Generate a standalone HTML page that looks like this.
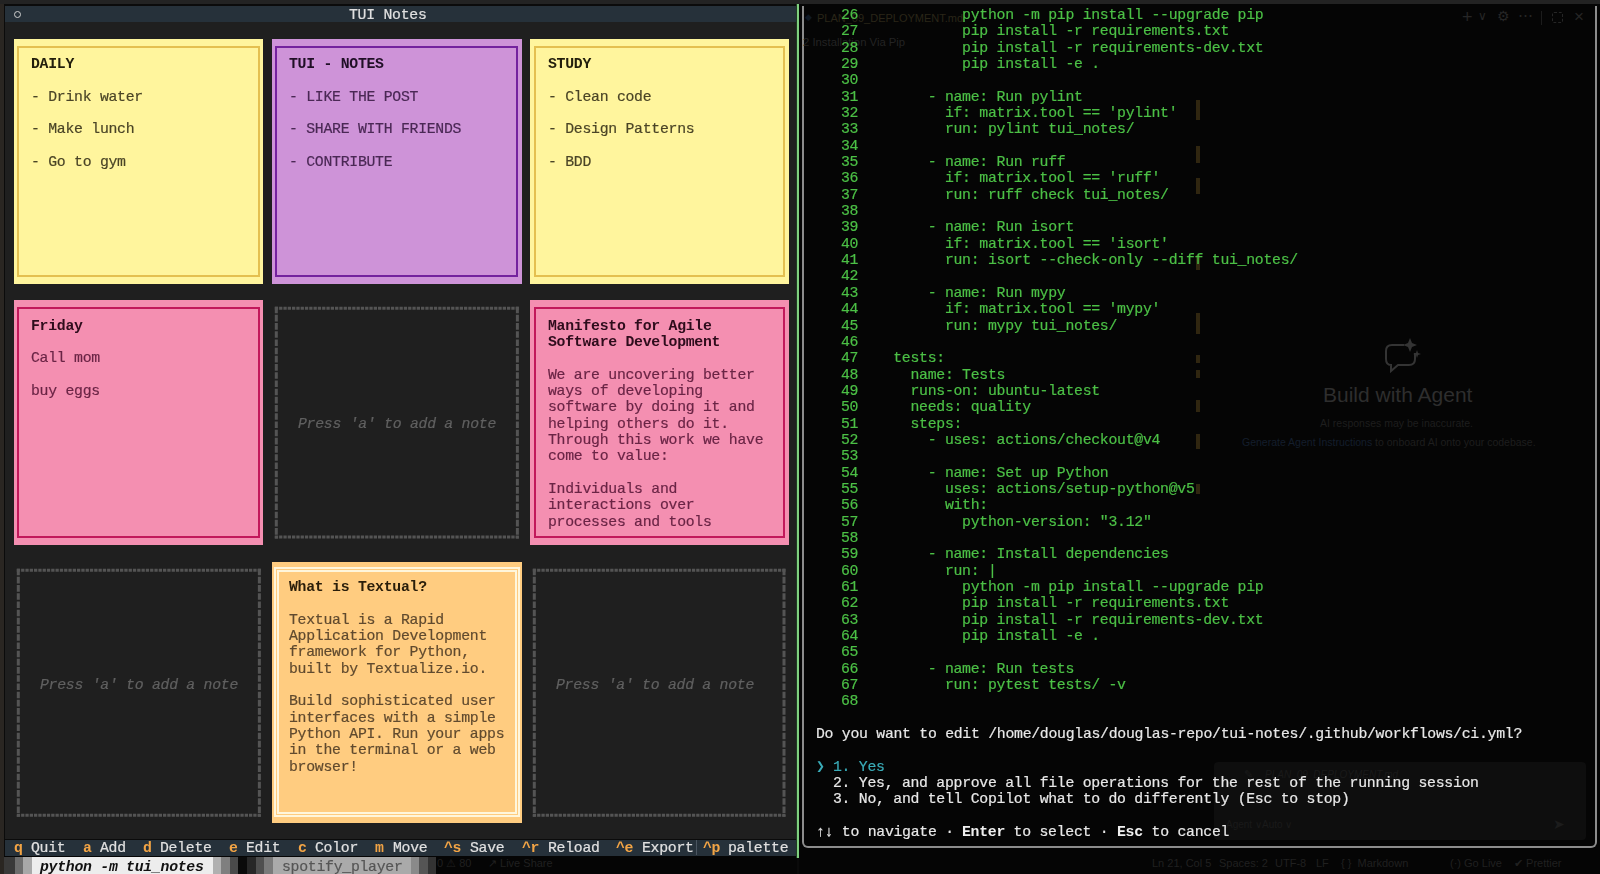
<!DOCTYPE html>
<html><head><meta charset="utf-8"><style>
html,body{margin:0;padding:0;width:1600px;height:874px;overflow:hidden;background:#0a0a0a}
.r{position:absolute;box-sizing:content-box}
.t{position:absolute;white-space:pre;will-change:transform;-webkit-text-stroke:0.2px currentColor;font-family:"Liberation Mono",monospace;font-size:14.8px;line-height:16.34px}
.s{position:absolute;white-space:pre;font-family:"Liberation Sans",sans-serif;line-height:1.2}
</style></head><body>
<div class="r" style="left:0.00px;top:0.00px;width:1600.00px;height:4.00px;background:#232323;"></div>
<div class="r" style="left:0.00px;top:4.00px;width:4.00px;height:870.00px;background:#2a2622;"></div>
<div class="r" style="left:4.00px;top:4.00px;width:793.00px;height:870.00px;background:#0b0b0b;"></div>
<div class="r" style="left:5.00px;top:6.00px;width:791.00px;height:833.00px;background:#1f1f1f;"></div>
<div class="r" style="left:5.00px;top:6.00px;width:791.00px;height:16.00px;background:#26313a;"></div>
<div class="r" style="left:13.9px;top:11.2px;width:5px;height:5px;border:1.7px solid #d0d0d0;border-radius:50%"></div>
<div class="t" style="left:349.49px;top:7.05px;color:#e0e0e0;letter-spacing:-0.270px;">TUI Notes</div>
<div class="r" style="left:14.00px;top:39.00px;width:249.00px;height:245.00px;background:#fff59d;"></div>
<div class="r" style="left:17.00px;top:45.95px;width:239.08px;height:226.76px;border:2px solid #e4c050"></div>
<div class="t" style="left:30.92px;top:56.07px;color:#221e0c;letter-spacing:-0.270px;font-weight:bold;-webkit-text-stroke:0;">DAILY</div>
<div class="t" style="left:30.92px;top:88.75px;color:#4a4426;letter-spacing:-0.270px;">- Drink water</div>
<div class="t" style="left:30.92px;top:121.43px;color:#4a4426;letter-spacing:-0.270px;">- Make lunch</div>
<div class="t" style="left:30.92px;top:154.11px;color:#4a4426;letter-spacing:-0.270px;">- Go to gym</div>
<div class="r" style="left:272.00px;top:39.00px;width:250.00px;height:245.00px;background:#ce93d8;"></div>
<div class="r" style="left:275.30px;top:45.95px;width:239.08px;height:226.76px;border:2px solid #74229e"></div>
<div class="t" style="left:289.22px;top:56.07px;color:#200f26;letter-spacing:-0.270px;font-weight:bold;-webkit-text-stroke:0;">TUI - NOTES</div>
<div class="t" style="left:289.22px;top:88.75px;color:#4a2855;letter-spacing:-0.270px;">- LIKE THE POST</div>
<div class="t" style="left:289.22px;top:121.43px;color:#4a2855;letter-spacing:-0.270px;">- SHARE WITH FRIENDS</div>
<div class="t" style="left:289.22px;top:154.11px;color:#4a2855;letter-spacing:-0.270px;">- CONTRIBUTE</div>
<div class="r" style="left:530.00px;top:39.00px;width:259.00px;height:245.00px;background:#fff59d;"></div>
<div class="r" style="left:533.61px;top:45.95px;width:247.69px;height:226.76px;border:2px solid #e4c050"></div>
<div class="t" style="left:547.52px;top:56.07px;color:#221e0c;letter-spacing:-0.270px;font-weight:bold;-webkit-text-stroke:0;">STUDY</div>
<div class="t" style="left:547.52px;top:88.75px;color:#4a4426;letter-spacing:-0.270px;">- Clean code</div>
<div class="t" style="left:547.52px;top:121.43px;color:#4a4426;letter-spacing:-0.270px;">- Design Patterns</div>
<div class="t" style="left:547.52px;top:154.11px;color:#4a4426;letter-spacing:-0.270px;">- BDD</div>
<div class="r" style="left:14.00px;top:300.00px;width:249.00px;height:245.00px;background:#f48fb1;"></div>
<div class="r" style="left:17.00px;top:307.39px;width:239.08px;height:226.76px;border:2px solid #c2185b"></div>
<div class="t" style="left:30.92px;top:317.51px;color:#2e0c1c;letter-spacing:-0.270px;font-weight:bold;-webkit-text-stroke:0;">Friday</div>
<div class="t" style="left:30.92px;top:350.19px;color:#6a2445;letter-spacing:-0.270px;">Call mom</div>
<div class="t" style="left:30.92px;top:382.87px;color:#6a2445;letter-spacing:-0.270px;">buy eggs</div>
<svg class="r" style="left:272.00px;top:300.22px" width="249.69" height="245.10"><g stroke="#545454" stroke-width="3" fill="none"><line x1="2.81" y1="8.17" x2="246.89" y2="8.17" stroke-dasharray="3.3 1"/><line x1="2.81" y1="236.93" x2="246.89" y2="236.93" stroke-dasharray="3.3 1"/><line x1="4.31" y1="6.67" x2="4.31" y2="238.43" stroke-dasharray="6.6 1.6"/><line x1="245.39" y1="6.67" x2="245.39" y2="238.43" stroke-dasharray="6.6 1.6"/></g></svg>
<div class="t" style="left:297.83px;top:415.55px;color:#606060;letter-spacing:-0.270px;font-style:italic;">Press &#x27;a&#x27; to add a note</div>
<div class="r" style="left:530.00px;top:300.00px;width:259.00px;height:245.00px;background:#f48fb1;"></div>
<div class="r" style="left:533.61px;top:307.39px;width:247.69px;height:226.76px;border:2px solid #c2185b"></div>
<div class="t" style="left:547.52px;top:317.51px;color:#2e0c1c;letter-spacing:-0.270px;font-weight:bold;-webkit-text-stroke:0;">Manifesto for Agile</div>
<div class="t" style="left:547.52px;top:333.85px;color:#2e0c1c;letter-spacing:-0.270px;font-weight:bold;-webkit-text-stroke:0;">Software Development</div>
<div class="t" style="left:547.52px;top:366.53px;color:#6a2445;letter-spacing:-0.270px;">We are uncovering better</div>
<div class="t" style="left:547.52px;top:382.87px;color:#6a2445;letter-spacing:-0.270px;">ways of developing</div>
<div class="t" style="left:547.52px;top:399.21px;color:#6a2445;letter-spacing:-0.270px;">software by doing it and</div>
<div class="t" style="left:547.52px;top:415.55px;color:#6a2445;letter-spacing:-0.270px;">helping others do it.</div>
<div class="t" style="left:547.52px;top:431.89px;color:#6a2445;letter-spacing:-0.270px;">Through this work we have</div>
<div class="t" style="left:547.52px;top:448.23px;color:#6a2445;letter-spacing:-0.270px;">come to value:</div>
<div class="t" style="left:547.52px;top:480.91px;color:#6a2445;letter-spacing:-0.270px;">Individuals and</div>
<div class="t" style="left:547.52px;top:497.25px;color:#6a2445;letter-spacing:-0.270px;">interactions over</div>
<div class="t" style="left:547.52px;top:513.59px;color:#6a2445;letter-spacing:-0.270px;">processes and tools</div>
<svg class="r" style="left:13.70px;top:561.66px" width="249.69" height="261.44"><g stroke="#545454" stroke-width="3" fill="none"><line x1="2.80" y1="8.17" x2="246.88" y2="8.17" stroke-dasharray="3.3 1"/><line x1="2.80" y1="253.27" x2="246.88" y2="253.27" stroke-dasharray="3.3 1"/><line x1="4.30" y1="6.67" x2="4.30" y2="254.77" stroke-dasharray="6.6 1.6"/><line x1="245.38" y1="6.67" x2="245.38" y2="254.77" stroke-dasharray="6.6 1.6"/></g></svg>
<div class="t" style="left:39.53px;top:676.99px;color:#606060;letter-spacing:-0.270px;font-style:italic;">Press &#x27;a&#x27; to add a note</div>
<div class="r" style="left:272.00px;top:562.00px;width:250.00px;height:261.00px;background:#ffcc80;"></div>
<div class="r" style="left:273.80px;top:567.33px;width:242.08px;height:246.10px;border:2px solid #fff6dc"></div>
<div class="r" style="left:276.80px;top:570.33px;width:236.08px;height:240.10px;border:2px solid #fff6dc"></div>
<div class="t" style="left:289.22px;top:578.95px;color:#2a1e0a;letter-spacing:-0.270px;font-weight:bold;-webkit-text-stroke:0;">What is Textual?</div>
<div class="t" style="left:289.22px;top:611.63px;color:#604a2e;letter-spacing:-0.270px;">Textual is a Rapid</div>
<div class="t" style="left:289.22px;top:627.97px;color:#604a2e;letter-spacing:-0.270px;">Application Development</div>
<div class="t" style="left:289.22px;top:644.31px;color:#604a2e;letter-spacing:-0.270px;">framework for Python,</div>
<div class="t" style="left:289.22px;top:660.65px;color:#604a2e;letter-spacing:-0.270px;">built by Textualize.io.</div>
<div class="t" style="left:289.22px;top:693.33px;color:#604a2e;letter-spacing:-0.270px;">Build sophisticated user</div>
<div class="t" style="left:289.22px;top:709.67px;color:#604a2e;letter-spacing:-0.270px;">interfaces with a simple</div>
<div class="t" style="left:289.22px;top:726.01px;color:#604a2e;letter-spacing:-0.270px;">Python API. Run your apps</div>
<div class="t" style="left:289.22px;top:742.35px;color:#604a2e;letter-spacing:-0.270px;">in the terminal or a web</div>
<div class="t" style="left:289.22px;top:758.69px;color:#604a2e;letter-spacing:-0.270px;">browser!</div>
<svg class="r" style="left:530.30px;top:561.66px" width="258.30" height="261.44"><g stroke="#545454" stroke-width="3" fill="none"><line x1="2.81" y1="8.17" x2="255.50" y2="8.17" stroke-dasharray="3.3 1"/><line x1="2.81" y1="253.27" x2="255.50" y2="253.27" stroke-dasharray="3.3 1"/><line x1="4.31" y1="6.67" x2="4.31" y2="254.77" stroke-dasharray="6.6 1.6"/><line x1="254.00" y1="6.67" x2="254.00" y2="254.77" stroke-dasharray="6.6 1.6"/></g></svg>
<div class="t" style="left:556.13px;top:676.99px;color:#606060;letter-spacing:-0.270px;font-style:italic;">Press &#x27;a&#x27; to add a note</div>
<div class="r" style="left:5.00px;top:840.00px;width:791.00px;height:16.00px;background:#26313a;"></div>
<div class="t" style="left:13.70px;top:840.39px;color:#f2a445;letter-spacing:-0.270px;font-weight:bold;-webkit-text-stroke:0;">q</div>
<div class="t" style="left:82.58px;top:840.39px;color:#f2a445;letter-spacing:-0.270px;font-weight:bold;-webkit-text-stroke:0;">a</div>
<div class="t" style="left:142.85px;top:840.39px;color:#f2a445;letter-spacing:-0.270px;font-weight:bold;-webkit-text-stroke:0;">d</div>
<div class="t" style="left:228.95px;top:840.39px;color:#f2a445;letter-spacing:-0.270px;font-weight:bold;-webkit-text-stroke:0;">e</div>
<div class="t" style="left:297.83px;top:840.39px;color:#f2a445;letter-spacing:-0.270px;font-weight:bold;-webkit-text-stroke:0;">c</div>
<div class="t" style="left:375.32px;top:840.39px;color:#f2a445;letter-spacing:-0.270px;font-weight:bold;-webkit-text-stroke:0;">m</div>
<div class="t" style="left:444.20px;top:840.39px;color:#f2a445;letter-spacing:-0.270px;font-weight:bold;-webkit-text-stroke:0;">^s</div>
<div class="t" style="left:521.69px;top:840.39px;color:#f2a445;letter-spacing:-0.270px;font-weight:bold;-webkit-text-stroke:0;">^r</div>
<div class="t" style="left:616.40px;top:840.39px;color:#f2a445;letter-spacing:-0.270px;font-weight:bold;-webkit-text-stroke:0;">^e</div>
<div class="t" style="left:702.50px;top:840.39px;color:#f2a445;letter-spacing:-0.270px;font-weight:bold;-webkit-text-stroke:0;">^p</div>
<div class="t" style="left:30.92px;top:840.39px;color:#e0e0e0;letter-spacing:-0.270px;">Quit</div>
<div class="t" style="left:99.80px;top:840.39px;color:#e0e0e0;letter-spacing:-0.270px;">Add</div>
<div class="t" style="left:160.07px;top:840.39px;color:#e0e0e0;letter-spacing:-0.270px;">Delete</div>
<div class="t" style="left:246.17px;top:840.39px;color:#e0e0e0;letter-spacing:-0.270px;">Edit</div>
<div class="t" style="left:315.05px;top:840.39px;color:#e0e0e0;letter-spacing:-0.270px;">Color</div>
<div class="t" style="left:392.54px;top:840.39px;color:#e0e0e0;letter-spacing:-0.270px;">Move</div>
<div class="t" style="left:470.03px;top:840.39px;color:#e0e0e0;letter-spacing:-0.270px;">Save</div>
<div class="t" style="left:547.52px;top:840.39px;color:#e0e0e0;letter-spacing:-0.270px;">Reload</div>
<div class="t" style="left:642.23px;top:840.39px;color:#e0e0e0;letter-spacing:-0.270px;">Export</div>
<div class="t" style="left:728.33px;top:840.39px;color:#e0e0e0;letter-spacing:-0.270px;">palette</div>
<div class="r" style="left:696.00px;top:840.00px;width:1.00px;height:15.00px;background:#4a5560;"></div>
<div class="r" style="left:4.00px;top:856.00px;width:793.00px;height:18.00px;background:#050505;"></div>
<div class="r" style="left:4.00px;top:857.00px;width:11.00px;height:17.00px;background:#393939;"></div>
<div class="r" style="left:15.00px;top:857.00px;width:8.00px;height:17.00px;background:#6d6d6d;"></div>
<div class="r" style="left:23.00px;top:857.00px;width:9.00px;height:17.00px;background:#a8a8a8;"></div>
<div class="r" style="left:32.00px;top:857.00px;width:181.00px;height:17.00px;background:#ededed;"></div>
<div class="t" style="left:40.43px;top:858.53px;color:#111111;letter-spacing:-0.270px;font-weight:bold;-webkit-text-stroke:0;font-style:italic;">python -m tui_notes</div>
<div class="r" style="left:213.00px;top:857.00px;width:8.00px;height:17.00px;background:#b0b0b0;"></div>
<div class="r" style="left:221.00px;top:857.00px;width:9.00px;height:17.00px;background:#7f7f7f;"></div>
<div class="r" style="left:230.00px;top:857.00px;width:8.00px;height:17.00px;background:#4a4a4a;"></div>
<div class="r" style="left:238.00px;top:857.00px;width:9.00px;height:17.00px;background:#0a0a0a;"></div>
<div class="r" style="left:247.00px;top:857.00px;width:9.00px;height:17.00px;background:#272727;"></div>
<div class="r" style="left:256.00px;top:857.00px;width:8.00px;height:17.00px;background:#4f4f4f;"></div>
<div class="r" style="left:264.00px;top:857.00px;width:9.00px;height:17.00px;background:#7a7a7a;"></div>
<div class="r" style="left:273.00px;top:857.00px;width:138.00px;height:17.00px;background:#aaaaaa;"></div>
<div class="t" style="left:281.51px;top:858.53px;color:#555555;letter-spacing:-0.270px;">spotify_player</div>
<div class="r" style="left:411.00px;top:857.00px;width:8.00px;height:17.00px;background:#8a8a8a;"></div>
<div class="r" style="left:419.00px;top:857.00px;width:9.00px;height:17.00px;background:#555555;"></div>
<div class="r" style="left:428.00px;top:857.00px;width:8.00px;height:17.00px;background:#333333;"></div>
<div class="r" style="left:796.00px;top:4.00px;width:1.00px;height:854.00px;background:#1f3a22;"></div>
<div class="r" style="left:797.00px;top:4.00px;width:2.00px;height:854.00px;background:#7fcf7f;"></div>
<div class="r" style="left:799.00px;top:4.00px;width:801.00px;height:870.00px;background:#050505;"></div>
<div class="r" style="left:802px;top:6px;width:791px;height:840px;border:2px solid #8c8c8c;border-top:none;border-radius:0 0 6px 6px"></div>
<div class="s" style="left:805px;top:12px;font-size:9px;color:#101a26;">◆</div>
<div class="s" style="left:817px;top:11.5px;font-size:11px;color:#2a2518;">PLAN_09_DEPLOYMENT.md</div>
<div class="s" style="left:803px;top:35.5px;font-size:11.3px;color:#232323;">2 Installation Via Pip</div>
<div class="r" style="left:803.00px;top:102.00px;width:397.00px;height:0.00px;background:#151515;"></div>
<div class="s" style="left:1462px;top:7px;font-size:18px;color:#262626;">+</div>
<div class="s" style="left:1478px;top:9px;font-size:12px;color:#262626;">∨</div>
<div class="s" style="left:1497px;top:8px;font-size:14px;color:#262626;">⚙</div>
<div class="s" style="left:1518px;top:6px;font-size:15px;color:#262626;">⋯</div>
<div class="r" style="left:1541.00px;top:11.00px;width:1.00px;height:14.00px;background:#1c1c1c;"></div>
<div class="r" style="left:1552px;top:12px;width:9px;height:9px;border:1.3px dashed #262626;border-radius:2px"></div>
<div class="s" style="left:1574px;top:7px;font-size:17px;color:#262626;">×</div>
<div class="r" style="left:1196.00px;top:100.00px;width:4.00px;height:20.00px;background:#302610;"></div>
<div class="r" style="left:1196.00px;top:146.00px;width:4.00px;height:17.00px;background:#302610;"></div>
<div class="r" style="left:1196.00px;top:178.00px;width:4.00px;height:16.00px;background:#302610;"></div>
<div class="r" style="left:1196.00px;top:255.00px;width:4.00px;height:15.00px;background:#302610;"></div>
<div class="r" style="left:1196.00px;top:313.00px;width:4.00px;height:21.00px;background:#302610;"></div>
<div class="r" style="left:1196.00px;top:355.00px;width:4.00px;height:8.00px;background:#302610;"></div>
<div class="r" style="left:1196.00px;top:370.00px;width:4.00px;height:8.00px;background:#302610;"></div>
<div class="r" style="left:1196.00px;top:400.00px;width:4.00px;height:12.00px;background:#302610;"></div>
<div class="r" style="left:1196.00px;top:434.00px;width:4.00px;height:15.00px;background:#302610;"></div>
<div class="r" style="left:1196.00px;top:484.00px;width:4.00px;height:10.00px;background:#302610;"></div>
<svg class="r" style="left:1380px;top:336px" width="44" height="40"><g fill="none" stroke="#343434" stroke-width="2"><path d="M12 9 H24 M35 17 V23 Q35 29 29 29 H18 L11 35 V29 Q6 29 6 23 V15 Q6 9 12 9"/></g><path d="M30 2 L32 7 L37 9 L32 11 L30 16 L28 11 L23 9 L28 7Z M37 14 L38 17 L41 18 L38 19 L37 22 L36 19 L33 18 L36 17Z" fill="#343434"/></svg>
<div class="s" style="left:1323px;top:382px;font-size:21px;color:#2e2e2e;">Build with Agent</div>
<div class="s" style="left:1320px;top:417px;font-size:10.5px;color:#1e1e1e;">AI responses may be inaccurate.</div>
<div class="s" style="left:1242px;top:436px;font-size:10.5px;color:#1e1e1e"><span style="color:#141e2c">Generate Agent Instructions</span> to onboard AI onto your codebase.</div>
<div class="r" style="left:1214px;top:762px;width:372px;height:78px;background:#0e0e0e;border-radius:4px"></div>
<div class="s" style="left:1244px;top:768px;font-size:11px;color:#1a1a1a;">✎</div>
<div class="s" style="left:1265px;top:769px;font-size:10px;color:#1a1a1a;font-style:italic;">PLAN_09_DEPLOYMENT.md</div>
<div class="s" style="left:1226px;top:819px;font-size:10px;color:#1a1a1a;">Agent ∨</div>
<div class="s" style="left:1262px;top:819px;font-size:10px;color:#1a1a1a;">Auto ∨</div>
<div class="s" style="left:1553px;top:816px;font-size:14px;color:#1c1c1c;">➤</div>
<div class="s" style="left:1152px;top:857px;font-size:11px;color:#202020;">Ln 21, Col 5</div>
<div class="s" style="left:1219px;top:857px;font-size:11px;color:#202020;">Spaces: 2</div>
<div class="s" style="left:1275px;top:857px;font-size:11px;color:#202020;">UTF-8</div>
<div class="s" style="left:1316px;top:857px;font-size:11px;color:#202020;">LF</div>
<div class="s" style="left:1341px;top:857px;font-size:11px;color:#202020;">{ }  Markdown</div>
<div class="s" style="left:1450px;top:857px;font-size:11px;color:#202020;">(·) Go Live</div>
<div class="s" style="left:1514px;top:857px;font-size:11px;color:#202020;">✔ Prettier</div>
<div class="s" style="left:437px;top:857px;font-size:11px;color:#202020;">0 ⚠ 80</div>
<div class="s" style="left:488px;top:857px;font-size:11px;color:#202020;">↗ Live Share</div>
<div class="t" style="left:841.43px;top:7.05px;color:#4cc046;letter-spacing:-0.270px;">26</div>
<div class="t" style="left:875.87px;top:7.05px;color:#4cc046;letter-spacing:-0.270px;">          python -m pip install --upgrade pip</div>
<div class="t" style="left:841.43px;top:23.39px;color:#4cc046;letter-spacing:-0.270px;">27</div>
<div class="t" style="left:875.87px;top:23.39px;color:#4cc046;letter-spacing:-0.270px;">          pip install -r requirements.txt</div>
<div class="t" style="left:841.43px;top:39.73px;color:#4cc046;letter-spacing:-0.270px;">28</div>
<div class="t" style="left:875.87px;top:39.73px;color:#4cc046;letter-spacing:-0.270px;">          pip install -r requirements-dev.txt</div>
<div class="t" style="left:841.43px;top:56.07px;color:#4cc046;letter-spacing:-0.270px;">29</div>
<div class="t" style="left:875.87px;top:56.07px;color:#4cc046;letter-spacing:-0.270px;">          pip install -e .</div>
<div class="t" style="left:841.43px;top:72.41px;color:#4cc046;letter-spacing:-0.270px;">30</div>
<div class="t" style="left:841.43px;top:88.75px;color:#4cc046;letter-spacing:-0.270px;">31</div>
<div class="t" style="left:875.87px;top:88.75px;color:#4cc046;letter-spacing:-0.270px;">      - name: Run pylint</div>
<div class="t" style="left:841.43px;top:105.09px;color:#4cc046;letter-spacing:-0.270px;">32</div>
<div class="t" style="left:875.87px;top:105.09px;color:#4cc046;letter-spacing:-0.270px;">        if: matrix.tool == &#x27;pylint&#x27;</div>
<div class="t" style="left:841.43px;top:121.43px;color:#4cc046;letter-spacing:-0.270px;">33</div>
<div class="t" style="left:875.87px;top:121.43px;color:#4cc046;letter-spacing:-0.270px;">        run: pylint tui_notes/</div>
<div class="t" style="left:841.43px;top:137.77px;color:#4cc046;letter-spacing:-0.270px;">34</div>
<div class="t" style="left:841.43px;top:154.11px;color:#4cc046;letter-spacing:-0.270px;">35</div>
<div class="t" style="left:875.87px;top:154.11px;color:#4cc046;letter-spacing:-0.270px;">      - name: Run ruff</div>
<div class="t" style="left:841.43px;top:170.45px;color:#4cc046;letter-spacing:-0.270px;">36</div>
<div class="t" style="left:875.87px;top:170.45px;color:#4cc046;letter-spacing:-0.270px;">        if: matrix.tool == &#x27;ruff&#x27;</div>
<div class="t" style="left:841.43px;top:186.79px;color:#4cc046;letter-spacing:-0.270px;">37</div>
<div class="t" style="left:875.87px;top:186.79px;color:#4cc046;letter-spacing:-0.270px;">        run: ruff check tui_notes/</div>
<div class="t" style="left:841.43px;top:203.13px;color:#4cc046;letter-spacing:-0.270px;">38</div>
<div class="t" style="left:841.43px;top:219.47px;color:#4cc046;letter-spacing:-0.270px;">39</div>
<div class="t" style="left:875.87px;top:219.47px;color:#4cc046;letter-spacing:-0.270px;">      - name: Run isort</div>
<div class="t" style="left:841.43px;top:235.81px;color:#4cc046;letter-spacing:-0.270px;">40</div>
<div class="t" style="left:875.87px;top:235.81px;color:#4cc046;letter-spacing:-0.270px;">        if: matrix.tool == &#x27;isort&#x27;</div>
<div class="t" style="left:841.43px;top:252.15px;color:#4cc046;letter-spacing:-0.270px;">41</div>
<div class="t" style="left:875.87px;top:252.15px;color:#4cc046;letter-spacing:-0.270px;">        run: isort --check-only --diff tui_notes/</div>
<div class="t" style="left:841.43px;top:268.49px;color:#4cc046;letter-spacing:-0.270px;">42</div>
<div class="t" style="left:841.43px;top:284.83px;color:#4cc046;letter-spacing:-0.270px;">43</div>
<div class="t" style="left:875.87px;top:284.83px;color:#4cc046;letter-spacing:-0.270px;">      - name: Run mypy</div>
<div class="t" style="left:841.43px;top:301.17px;color:#4cc046;letter-spacing:-0.270px;">44</div>
<div class="t" style="left:875.87px;top:301.17px;color:#4cc046;letter-spacing:-0.270px;">        if: matrix.tool == &#x27;mypy&#x27;</div>
<div class="t" style="left:841.43px;top:317.51px;color:#4cc046;letter-spacing:-0.270px;">45</div>
<div class="t" style="left:875.87px;top:317.51px;color:#4cc046;letter-spacing:-0.270px;">        run: mypy tui_notes/</div>
<div class="t" style="left:841.43px;top:333.85px;color:#4cc046;letter-spacing:-0.270px;">46</div>
<div class="t" style="left:841.43px;top:350.19px;color:#4cc046;letter-spacing:-0.270px;">47</div>
<div class="t" style="left:875.87px;top:350.19px;color:#4cc046;letter-spacing:-0.270px;">  tests:</div>
<div class="t" style="left:841.43px;top:366.53px;color:#4cc046;letter-spacing:-0.270px;">48</div>
<div class="t" style="left:875.87px;top:366.53px;color:#4cc046;letter-spacing:-0.270px;">    name: Tests</div>
<div class="t" style="left:841.43px;top:382.87px;color:#4cc046;letter-spacing:-0.270px;">49</div>
<div class="t" style="left:875.87px;top:382.87px;color:#4cc046;letter-spacing:-0.270px;">    runs-on: ubuntu-latest</div>
<div class="t" style="left:841.43px;top:399.21px;color:#4cc046;letter-spacing:-0.270px;">50</div>
<div class="t" style="left:875.87px;top:399.21px;color:#4cc046;letter-spacing:-0.270px;">    needs: quality</div>
<div class="t" style="left:841.43px;top:415.55px;color:#4cc046;letter-spacing:-0.270px;">51</div>
<div class="t" style="left:875.87px;top:415.55px;color:#4cc046;letter-spacing:-0.270px;">    steps:</div>
<div class="t" style="left:841.43px;top:431.89px;color:#4cc046;letter-spacing:-0.270px;">52</div>
<div class="t" style="left:875.87px;top:431.89px;color:#4cc046;letter-spacing:-0.270px;">      - uses: actions/checkout@v4</div>
<div class="t" style="left:841.43px;top:448.23px;color:#4cc046;letter-spacing:-0.270px;">53</div>
<div class="t" style="left:841.43px;top:464.57px;color:#4cc046;letter-spacing:-0.270px;">54</div>
<div class="t" style="left:875.87px;top:464.57px;color:#4cc046;letter-spacing:-0.270px;">      - name: Set up Python</div>
<div class="t" style="left:841.43px;top:480.91px;color:#4cc046;letter-spacing:-0.270px;">55</div>
<div class="t" style="left:875.87px;top:480.91px;color:#4cc046;letter-spacing:-0.270px;">        uses: actions/setup-python@v5</div>
<div class="t" style="left:841.43px;top:497.25px;color:#4cc046;letter-spacing:-0.270px;">56</div>
<div class="t" style="left:875.87px;top:497.25px;color:#4cc046;letter-spacing:-0.270px;">        with:</div>
<div class="t" style="left:841.43px;top:513.59px;color:#4cc046;letter-spacing:-0.270px;">57</div>
<div class="t" style="left:875.87px;top:513.59px;color:#4cc046;letter-spacing:-0.270px;">          python-version: &quot;3.12&quot;</div>
<div class="t" style="left:841.43px;top:529.93px;color:#4cc046;letter-spacing:-0.270px;">58</div>
<div class="t" style="left:841.43px;top:546.27px;color:#4cc046;letter-spacing:-0.270px;">59</div>
<div class="t" style="left:875.87px;top:546.27px;color:#4cc046;letter-spacing:-0.270px;">      - name: Install dependencies</div>
<div class="t" style="left:841.43px;top:562.61px;color:#4cc046;letter-spacing:-0.270px;">60</div>
<div class="t" style="left:875.87px;top:562.61px;color:#4cc046;letter-spacing:-0.270px;">        run: |</div>
<div class="t" style="left:841.43px;top:578.95px;color:#4cc046;letter-spacing:-0.270px;">61</div>
<div class="t" style="left:875.87px;top:578.95px;color:#4cc046;letter-spacing:-0.270px;">          python -m pip install --upgrade pip</div>
<div class="t" style="left:841.43px;top:595.29px;color:#4cc046;letter-spacing:-0.270px;">62</div>
<div class="t" style="left:875.87px;top:595.29px;color:#4cc046;letter-spacing:-0.270px;">          pip install -r requirements.txt</div>
<div class="t" style="left:841.43px;top:611.63px;color:#4cc046;letter-spacing:-0.270px;">63</div>
<div class="t" style="left:875.87px;top:611.63px;color:#4cc046;letter-spacing:-0.270px;">          pip install -r requirements-dev.txt</div>
<div class="t" style="left:841.43px;top:627.97px;color:#4cc046;letter-spacing:-0.270px;">64</div>
<div class="t" style="left:875.87px;top:627.97px;color:#4cc046;letter-spacing:-0.270px;">          pip install -e .</div>
<div class="t" style="left:841.43px;top:644.31px;color:#4cc046;letter-spacing:-0.270px;">65</div>
<div class="t" style="left:841.43px;top:660.65px;color:#4cc046;letter-spacing:-0.270px;">66</div>
<div class="t" style="left:875.87px;top:660.65px;color:#4cc046;letter-spacing:-0.270px;">      - name: Run tests</div>
<div class="t" style="left:841.43px;top:676.99px;color:#4cc046;letter-spacing:-0.270px;">67</div>
<div class="t" style="left:875.87px;top:676.99px;color:#4cc046;letter-spacing:-0.270px;">        run: pytest tests/ -v</div>
<div class="t" style="left:841.43px;top:693.33px;color:#4cc046;letter-spacing:-0.270px;">68</div>
<div class="t" style="left:815.60px;top:726.01px;color:#e8e8e8;letter-spacing:-0.270px;">Do you want to edit /home/douglas/douglas-repo/tui-notes/.github/workflows/ci.yml?</div>
<div class="t" style="left:815.60px;top:758.69px;color:#3aacb8;letter-spacing:-0.270px;font-weight:bold;-webkit-text-stroke:0;">❯</div>
<div class="t" style="left:832.82px;top:758.69px;color:#3aacb8;letter-spacing:-0.270px;">1. Yes</div>
<div class="t" style="left:832.82px;top:775.03px;color:#e8e8e8;letter-spacing:-0.270px;">2. Yes, and approve all file operations for the rest of the running session</div>
<div class="t" style="left:832.82px;top:791.37px;color:#e8e8e8;letter-spacing:-0.270px;">3. No, and tell Copilot what to do differently (Esc to stop)</div>
<div class="t" style="left:815.60px;top:824.05px;color:#e8e8e8;letter-spacing:-0.270px;">↑↓ to navigate · </div>
<div class="t" style="left:961.97px;top:824.05px;color:#f0f0f0;letter-spacing:-0.270px;font-weight:bold;-webkit-text-stroke:0;">Enter</div>
<div class="t" style="left:1005.02px;top:824.05px;color:#e8e8e8;letter-spacing:-0.270px;"> to select · </div>
<div class="t" style="left:1116.95px;top:824.05px;color:#f0f0f0;letter-spacing:-0.270px;font-weight:bold;-webkit-text-stroke:0;">Esc</div>
<div class="t" style="left:1142.78px;top:824.05px;color:#e8e8e8;letter-spacing:-0.270px;"> to cancel</div>
</body></html>
